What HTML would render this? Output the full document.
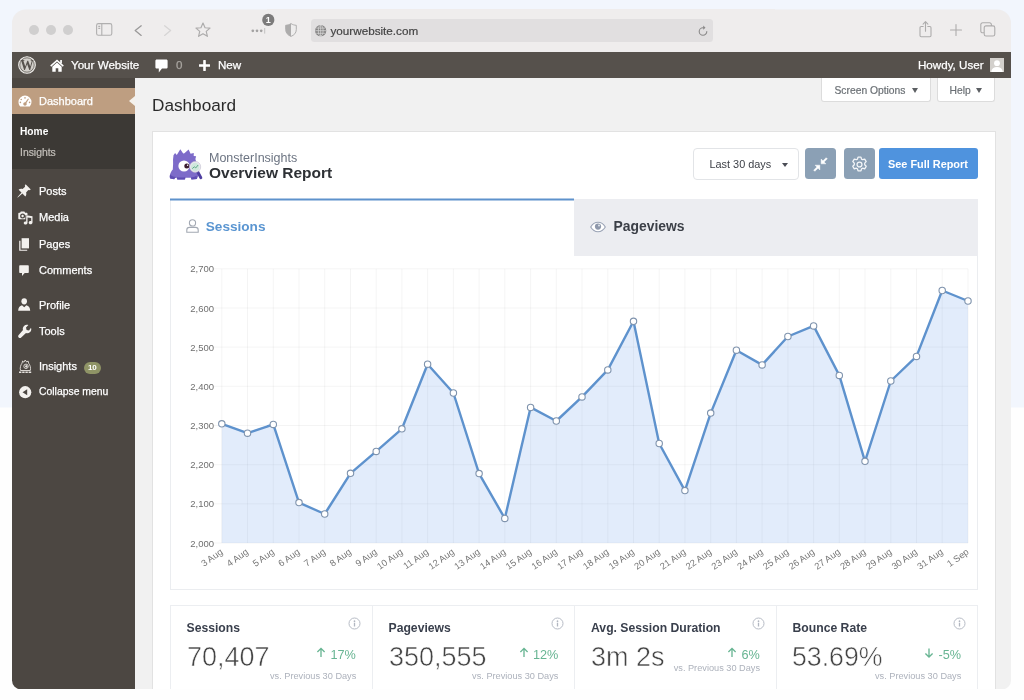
<!DOCTYPE html>
<html lang="en">
<head>
<meta charset="utf-8">
<title>Dashboard ‹ Your Website — WordPress</title>
<style>
*{box-sizing:border-box;margin:0;padding:0}
html,body{width:1024px;height:700px;overflow:hidden}
body{background:linear-gradient(#f2f6fd 0,#f2f6fd 407px,#fefefe 408px,#fefefe 100%);font-family:"Liberation Sans",sans-serif;color:#333;position:relative}
.win{will-change:transform;position:absolute;left:0;top:0;width:1024px;height:700px;clip-path:inset(9.4px 13px 10.6px 12px round 14px 14px 9px 9px);background:#f1f1f1}
.win *{position:absolute;white-space:nowrap}
.t{line-height:1;transform:translateY(-50%)}
/* browser chrome */
.chrome{left:12px;top:9px;width:999px;height:43px;background:#efeded}
.dot{width:10.2px;height:10.2px;border-radius:50%;background:#d0cfcf;top:25.1px}
.url{left:310.5px;top:19px;width:402.5px;height:22.5px;border-radius:3.5px;background:#e1dfe0}
.urltxt{left:330.5px;top:30.8px;font-size:11.7px;color:#444;-webkit-text-stroke:.2px currentColor}
/* admin bar */
.abar{left:12px;top:52px;width:999px;height:26px;background:#56514c}
.abar-t{top:65.1px;font-size:11.6px;color:#fff}
/* sidebar */
.side{left:12px;top:78px;width:123px;height:622px;background:#4c4742}
.side-act{left:12px;top:88px;width:123px;height:26px;background:#be9e81}
.side-sub{left:12px;top:114px;width:123px;height:55px;background:#3c3935}
.mi{left:39px;font-size:11px;color:#fff}
.arrow{left:128.6px;top:96px;width:0;height:0;border:5.5px solid transparent;border-right:6.4px solid #f4f1ec;border-left-width:0}
/* content */
.h1{left:152px;top:105.7px;font-size:17.2px;color:#2b2b2b}
.sbtn{top:78px;height:23.5px;background:#fff;border:1px solid #dcdcdc;border-top:0;border-radius:0 0 3px 3px}
.sbtn-t{font-size:10.3px;color:#6b7075;top:90.8px;-webkit-text-stroke:.2px currentColor}
.postbox{left:152px;top:131px;width:843.5px;height:600px;background:#fff;border:1px solid #e2e2e2}
.mi1{left:209px;top:158px;font-size:12.5px;color:#6c7482}
.mi2{left:209px;top:173.1px;font-size:15.5px;font-weight:bold;color:#2e3135}
.dd{left:693px;top:148px;width:105.5px;height:32px;background:#fff;border:1px solid #e2e4e7;border-radius:4px}
.dd-t{left:709.5px;top:163.8px;font-size:10.9px;color:#3c3f46}
.ib{top:148px;width:31px;height:31px;background:#8ba0b5;border-radius:3.5px}
.fr{left:878.5px;top:148px;width:99.5px;height:31px;background:#4f93de;border-radius:3px}
.fr-t{left:888px;top:163.8px;font-size:10.9px;font-weight:bold;color:#fff}
.card{left:170px;top:199px;width:808px;height:390.5px;background:#fff;border:1px solid #ebedf0}
.tab1{left:170px;top:198px;width:404px;height:3px;background:linear-gradient(rgba(94,146,204,.5) 0,rgba(94,146,204,.5) 1px,#5e92cc 1px,#5e92cc 2px,rgba(94,146,204,.5) 2px,rgba(94,146,204,.5) 3px)}
.tab2{left:574px;top:199px;width:404px;height:57px;background:#ecedf1}
.tab1-t{left:205.8px;top:226.6px;font-size:13.6px;font-weight:bold;color:#5a95d1}
.tab2-t{left:613.5px;top:226.8px;font-size:13.9px;font-weight:bold;color:#3b3f47}
.chart{left:170px;top:256px}
.stats{left:170px;top:605px;width:808px;height:120px;background:#fff;border:1px solid #eceef1}
.div{top:605px;width:1px;height:100px;background:#eceef1}
.st{top:627.5px;font-size:12.2px;font-weight:bold;color:#393f4c}
.sv{top:656.3px;font-size:28.4px;color:#444;-webkit-text-stroke:.55px #fff;transform:translateY(-50%) scaleX(.95);transform-origin:0 50%}
.sp{top:655px;font-size:12.7px;color:#68b593}
.ss{top:677px;font-size:9.2px;color:#adb2bc}
svg.ic{overflow:visible}
.tri{width:0;height:0;border-style:solid;border-width:5px 3px 0;border-color:#5c5f63 transparent transparent}
.abar-t,.mi{-webkit-text-stroke:.25px currentColor}
</style>
</head>
<body>
<div class="win">
<!-- ===== browser chrome ===== -->
<div class="chrome"></div>
<div class="dot" style="left:29px"></div><div class="dot" style="left:46px"></div><div class="dot" style="left:63px"></div>
<svg class="ic" style="left:95.8px;top:23.4px" width="17" height="13" viewBox="0 0 17 13" fill="none" stroke="#b0afaf" stroke-width="1.1"><rect x=".6" y=".6" width="15.2" height="11.6" rx="1.8"/><path d="M5.8.6v11.6M2.3 3.4h1.9M2.3 5.4h1.9"/></svg>
<svg class="ic" style="left:134px;top:24.6px" width="9" height="12" viewBox="0 0 9 12" fill="none" stroke="#9a9999" stroke-width="1.3" stroke-linecap="round" stroke-linejoin="round"><path d="M7.2.8 1.2 5.6l6 4.8"/></svg>
<svg class="ic" style="left:163.2px;top:24.6px" width="9" height="12" viewBox="0 0 9 12" fill="none" stroke="#d6d5d5" stroke-width="1.3" stroke-linecap="round" stroke-linejoin="round"><path d="M1.6.8l6 4.8-6 4.8"/></svg>
<svg class="ic" style="left:194.5px;top:21.5px" width="16.2" height="16.2" viewBox="0 0 15 15" fill="none" stroke="#adacac" stroke-width="1.1" stroke-linejoin="round"><path d="M7.4 1l1.9 4.3 4.6.4-3.5 3 1.1 4.6-4.1-2.5-4.1 2.5 1.1-4.6-3.5-3 4.6-.4z"/></svg>
<svg class="ic" style="left:250px;top:14px" width="26" height="22" viewBox="0 0 26 22"><g fill="#a3a2a2"><circle cx="2.8" cy="16.8" r="1.35"/><circle cx="7" cy="16.8" r="1.35"/><circle cx="11.2" cy="16.8" r="1.35"/></g><rect x="14.2" y="14" width="1" height="5.6" fill="#c2c1c1"/><circle cx="18.3" cy="5.9" r="6.1" fill="#7c7b7b"/><text x="18.3" y="9.2" font-size="9" font-weight="bold" fill="#fff" text-anchor="middle" font-family="Liberation Sans, sans-serif">1</text></svg>
<svg class="ic" style="left:285px;top:22.8px" width="12" height="14" viewBox="0 0 12 14"><path d="M6 .6C4.4 1.7 2.6 2.2.7 2.3v4.3c0 3.3 2.2 5.6 5.3 6.8 3.1-1.2 5.3-3.5 5.3-6.8V2.3C9.4 2.2 7.6 1.7 6 .6z" fill="#eeeded" stroke="#b0afaf" stroke-width="1"/><path d="M6 .6C4.4 1.7 2.6 2.2.7 2.3v4.3c0 3.3 2.2 5.6 5.3 6.8z" fill="#adacac"/></svg>
<div class="url"></div>
<svg class="ic" style="left:314.7px;top:25.2px" width="11.4" height="11.4" viewBox="0 0 11 11" fill="none" stroke="#dddcdc" stroke-width=".7"><circle cx="5.5" cy="5.5" r="5.4" fill="#838282" stroke="none"/><ellipse cx="5.5" cy="5.5" rx="2.3" ry="5"/><path d="M.4 5.5h10.2M1.2 3h8.6M1.2 8h8.6M5.5.4v10.2"/></svg>
<div class="urltxt t">yourwebsite.com</div>
<svg class="ic" style="left:697.7px;top:25.3px" width="10" height="11" viewBox="0 0 10 11" fill="none" stroke="#8a8989" stroke-width="1.1" stroke-linecap="round"><path d="M8.8 6.5a3.8 3.8 0 1 1-3.8-3.8h.6"/><path d="M5.2.6l2.3 2.1-2.3 2.1z" fill="#8a8989" stroke="none"/></svg>
<svg class="ic" style="left:919.2px;top:20.6px" width="13" height="17" viewBox="0 0 13 17" fill="none" stroke="#adacac" stroke-width="1.1" stroke-linecap="round" stroke-linejoin="round"><path d="M4.2 5.5H2.2a1.2 1.2 0 0 0-1.2 1.2v7.8a1.2 1.2 0 0 0 1.2 1.2h8.6a1.2 1.2 0 0 0 1.2-1.2V6.7a1.2 1.2 0 0 0-1.2-1.2H8.8"/><path d="M6.5 10.3V.9M4.1 3.1L6.5.7l2.4 2.4"/></svg>
<svg class="ic" style="left:950.3px;top:23.8px" width="12" height="12" viewBox="0 0 12 12" fill="none" stroke="#adacac" stroke-width="1.1" stroke-linecap="round"><path d="M6 .5v11M.5 6h11"/></svg>
<svg class="ic" style="left:980px;top:22.3px" width="15.4" height="14.6" viewBox="0 0 15.4 14.6" fill="none" stroke="#adacac" stroke-width="1.1"><path d="M4 10.8H2.6A1.8 1.8 0 0 1 .8 9V2.6A1.8 1.8 0 0 1 2.6.8h7A1.8 1.8 0 0 1 11.4 2.6V4"/><rect x="4.2" y="3.9" width="10.6" height="10.1" rx="1.8"/></svg>

<!-- ===== admin bar ===== -->
<div class="abar"></div>
<svg class="ic" style="left:17.5px;top:56px" width="18" height="18" viewBox="0 0 18 18"><circle cx="9" cy="9" r="8.3" fill="#d2cfca" stroke="#efedea" stroke-width="1.1"/><circle cx="9" cy="9" r="7.2" fill="none" stroke="#56514c" stroke-width=".7"/><text x="9" y="14" font-family="Liberation Serif, serif" font-weight="bold" font-size="15" fill="#56514c" text-anchor="middle" textLength="13.5" lengthAdjust="spacingAndGlyphs">W</text></svg>
<svg class="ic" style="left:50px;top:58.5px" width="14" height="13" viewBox="0 0 14 13" fill="#fff"><path d="M7 .4l6.8 6.2-1 1.1L7 2.5 1.2 7.7l-1-1.1z"/><path d="M2.3 7.7L7 3.6l4.7 4.1v5H8.3V9.2H5.7v3.5H2.3z"/><rect x="10.2" y="1" width="1.7" height="3.4"/></svg>
<div class="abar-t t" style="left:71px">Your Website</div>
<svg class="ic" style="left:155px;top:59px" width="13" height="14" viewBox="0 0 13 14" fill="#fff"><path d="M1.8.4h9.4c.800 0 1.4.6 1.4 1.4v6.4c0 .8-.6 1.4-1.4 1.4H7l-3.2 3.8V9.6h-2C1 9.6.4 9 .4 8.2V1.8C.4 1 1 .4 1.8.4z"/></svg>
<div class="abar-t t" style="left:176px;color:#a9a5a0">0</div>
<svg class="ic" style="left:199px;top:60px" width="11" height="11" viewBox="0 0 11 11" fill="#fff"><rect x="4.2" width="2.6" height="11" rx=".4"/><rect y="4.2" width="11" height="2.6" rx=".4"/></svg>
<div class="abar-t t" style="left:218px">New</div>
<div class="abar-t t" style="left:918px">Howdy, User</div>
<svg class="ic" style="left:990.3px;top:57.5px" width="14" height="14" viewBox="0 0 14 14"><rect width="14" height="14" fill="#d3d0cc"/><circle cx="7" cy="5.2" r="2.9" fill="#fff"/><path d="M1.2 14c.3-3.4 2.6-5 5.8-5s5.5 1.6 5.8 5z" fill="#fff"/></svg>

<!-- ===== sidebar ===== -->
<div class="side"></div>
<div class="side-act"></div>
<div class="side-sub"></div>
<div class="arrow"></div>
<svg class="ic" style="left:18px;top:95px" width="14" height="12" viewBox="0 0 14 12" fill="#fff"><path d="M7 .5A6.5 6.5 0 0 0 .5 7c0 1.7.6 3.2 1.7 4.4h9.6A6.4 6.4 0 0 0 13.5 7 6.5 6.5 0 0 0 7 .5zm0 1.6c.5 0 .8.4.8.8s-.3.8-.8.8-.8-.3-.8-.8.3-.8.8-.8zM3.2 3.7c.4 0 .8.3.8.8s-.4.8-.8.8-.800-.400-.800-.800.4-.800.8-.800zm6.9-.2l.8.5-2.5 4c.2.3.3.6.3 1 0 1-.8 1.7-1.7 1.7S5.3 9.9 5.3 9 6 7.3 7 7.3h.3zM2.4 6.6c.4 0 .8.4.8.8s-.4.8-.8.8-.800-.300-.800-.800.3-.800.8-.800zm9.2 0c.4 0 .8.4.8.8s-.4.8-.8.8-.800-.300-.800-.800.3-.800.8-.800z"/></svg>
<div class="mi t" style="top:101px;color:#fff">Dashboard</div>
<div class="t" style="left:20px;top:131.9px;font-size:10.2px;font-weight:bold;color:#fff">Home</div>
<div class="t" style="left:20px;top:153.2px;font-size:10.4px;color:#c4c0bb;-webkit-text-stroke:.2px currentColor">Insights</div>

<svg class="ic" style="left:17.3px;top:184.2px" width="14" height="14" viewBox="0 0 14 14" fill="#f3f1ee"><path d="M8.6.2l5.2 5.2-1.5.8-1-.3-2.2 2.5c.5 1.5.2 3-.8 4L5.4 9.5.8 13.6l-.4-.4 4.1-4.6L1.6 5.7c1-1 2.5-1.3 4-.8l2.5-2.2-.3-1z"/></svg>
<div class="mi t" style="top:190.5px">Posts</div>
<svg class="ic" style="left:17.5px;top:210.8px" width="15" height="14" viewBox="0 0 15 14" fill="#f3f1ee"><path fill-rule="evenodd" d="M2.8.6h3.6l.7 1.2h1.4c.6 0 1 .4 1 1v1.5H7.3v3.9H1.3c-.6 0-1-.4-1-1V2.8c0-.6.4-1 1-1h.8zM4.6 2.5a2.5 2.5 0 1 0 0 5 2.5 2.5 0 0 0 0-5zm0 1.3a1.2 1.2 0 1 1 0 2.4 1.2 1.2 0 0 1 0-2.4z"/><path d="M8.2 4.3l6.3.9v6.2c0 1-.9 1.8-2 1.8s-1.8-.6-1.8-1.5c0-.9.8-1.6 1.8-1.6.3 0 .5 0 .7.1V7.1l-3.7-.6v5.2c0 1-.9 1.8-2 1.8S5.7 12.9 5.7 12s.8-1.6 1.8-1.6c.3 0 .5 0 .7.1z"/></svg>
<div class="mi t" style="top:217px">Media</div>
<svg class="ic" style="left:19px;top:237.7px" width="11" height="13" viewBox="0 0 11 13" fill="#f3f1ee"><path d="M2.6.2h7.4v10.2H2.6z"/><path d="M.2 2.7h1.3v9h6.7v1.1H.2z"/></svg>
<div class="mi t" style="top:243.5px">Pages</div>
<svg class="ic" style="left:19.3px;top:264.7px" width="10" height="11" viewBox="0 0 10 11" fill="#f3f1ee"><path d="M1.2.2h7.6c.6 0 1 .4 1 1v5.8c0 .6-.4 1-1 1H5.7L3 10.9V8H1.2c-.6 0-1-.4-1-1V1.2c0-.6.4-1 1-1z"/></svg>
<div class="mi t" style="top:270px">Comments</div>
<svg class="ic" style="left:18.4px;top:298.4px" width="12.5" height="13" viewBox="0 0 12.5 13" fill="#f3f1ee"><ellipse cx="6.2" cy="3.3" rx="2.8" ry="3.1"/><path d="M.2 12.8c0-3 1.5-5 3.8-5.5l2.2 1.9 2.2-1.9c2.3.5 3.8 2.5 3.8 5.5z"/></svg>
<div class="mi t" style="top:305px">Profile</div>
<svg class="ic" style="left:18px;top:325px" width="13.5" height="13" viewBox="0 0 13.5 13" fill="#f3f1ee"><path d="M13 2.7c.6 1.5.3 3.2-.9 4.4-1.1 1.1-2.7 1.5-4.1 1L3.2 12.4c-.7.7-1.8.7-2.5 0s-.7-1.8 0-2.5L5 5.1c-.5-1.4-.1-3 1-4.1C7.2-.2 8.9-.5 10.4.1L8 2.5l.6 2.4 2.4.6z"/></svg>
<div class="mi t" style="top:331px">Tools</div>
<svg class="ic" style="left:17.5px;top:358.5px" width="15" height="15" viewBox="0 0 15 15" fill="none" stroke="#e6e3df" stroke-width=".9"><path d="M2.5 11.5c-.8-3 .3-5.5 1.5-7.3L4.6 2l1.3 1.2L7.2 1l1.5 2 1.4-1 .6 2.4c1.3 1.7 2.3 4.1 1.6 7.1z"/><circle cx="8" cy="7.3" r="2.2"/><circle cx="8.3" cy="7.4" r=".8" fill="#e6e3df"/><path d="M1 13.3h13" stroke-width="1.6" stroke-dasharray="2.4 .8"/></svg>
<div class="mi t" style="top:366.3px">Insights</div>
<div style="left:84px;top:362px;width:17px;height:11.5px;border-radius:6px;background:#8f9466"></div>
<div class="t" style="left:88px;top:368px;font-size:8px;font-weight:bold;color:#fff;letter-spacing:-.2px">10</div>
<svg class="ic" style="left:18.5px;top:386.2px" width="12.4" height="12.4" viewBox="0 0 13 13"><circle cx="6.5" cy="6.5" r="6.4" fill="#f3f1ee"/><path d="M8.6 3.3v6.4L3.7 6.5z" fill="#4c4742"/></svg>
<div class="mi t" style="top:392px;font-size:10.4px">Collapse menu</div>

<!-- ===== content ===== -->
<div class="h1 t">Dashboard</div>
<div class="sbtn" style="left:821px;width:110px"></div>
<div class="sbtn-t t" style="left:834.5px">Screen Options</div>
<div class="tri" style="left:912px;top:88px"></div>
<div class="sbtn" style="left:936.6px;width:58.4px"></div>
<div class="sbtn-t t" style="left:949.5px">Help</div>
<div class="tri" style="left:975.8px;top:88px"></div>

<div class="postbox"></div>
<!-- MonsterInsights logo -->
<svg class="ic" style="left:164px;top:144px" width="44" height="40" viewBox="0 0 44 40">
<path d="M6.3 34.6C5 32.2 6.3 28.2 8.8 25.4L9.1 20C8.9 17 9 14 9.5 11.3l1.6-2.4 1.7 2.1 3.5-5.8 2.9 4.3 1.2-.2 4.2-3.8 2 4.3 3.2-.7-.1 2.9 2.4.2-.7 2.8c1.2 3 1.5 7 1.1 11l2.4 4.4-2 4.6-5.4.4-.5-1.6h-5.4l-.6 1.6h-7.8l-.6-1.6h-1.4l-.6 1.4z" fill="#7d6bc9"/>
<path d="M6.3 34.6c-.6-1.1-.6-2.6-.2-4.2 1.4 1.5 3.3 2.3 5.6 2.6l.3.8h-1.4l-.6 1.4zM12.9 33.2c2.8.3 5.6.3 8.3 0l-.4 2.2h-7.4zM26.9 33.6c2-.4 4-1 5.7-1.9l.4 3.3-5.6.4z" fill="#5f4db3"/>
<circle cx="20" cy="22" r="5.6" fill="#fff"/>
<circle cx="22.8" cy="22.1" r="2.5" fill="#3c1d30"/>
<circle cx="23.6" cy="21.2" r=".7" fill="#fff"/>
<path d="M33.6 27.6l3.2 6" stroke="#4f3fa0" stroke-width="3" stroke-linecap="round"/>
<circle cx="31.2" cy="22.9" r="4.9" fill="#cfe7dc" stroke="#eceaf1" stroke-width="1.3"/>
<circle cx="31.2" cy="22.9" r="5.5" fill="none" stroke="#b9b4c6" stroke-width=".5"/>
<path d="M28.3 24.6l2-1.8 1.5 1.1 2.3-2.9" fill="none" stroke="#62a98a" stroke-width="1"/>
</svg>
<div class="mi1 t">MonsterInsights</div>
<div class="mi2 t">Overview Report</div>
<div class="dd"></div>
<div class="dd-t t">Last 30 days</div>
<div class="tri" style="left:781.7px;top:162.5px;border-width:4.5px 3px 0;border-top-color:#4a4d55"></div>
<div class="ib" style="left:804.5px"></div>
<svg class="ic" style="left:812.5px;top:156.5px" width="15" height="15" viewBox="0 0 14 14" fill="#fff" stroke="#fff" stroke-width=".4"><path d="M13.4 1.7l-3 3 1.7 1.7H7.6V1.9l1.7 1.7 3-3z"/><path d="M.6 12.3l3-3-1.7-1.7h4.5v4.5l-1.7-1.7-3 3z"/></svg>
<div class="ib" style="left:843.5px"></div>
<svg class="ic" style="left:850.5px;top:155.8px" width="17" height="17" viewBox="0 0 16 16" fill="none" stroke="#f4f6f9" stroke-width="1.2" stroke-linejoin="round"><path d="M6.6 1h2.8l.5 1.9 1.1.6 1.9-.6 1.4 2.4-1.4 1.4v1.6l1.4 1.4-1.4 2.4-1.9-.6-1.1.6-.5 1.9H6.6l-.5-1.9-1.1-.6-1.9.6-1.4-2.4 1.4-1.4V6.7L1.7 5.3l1.4-2.4 1.9.6 1.1-.6z"/><circle cx="8" cy="8" r="2.3"/></svg>
<div class="fr"></div>
<div class="fr-t t">See Full Report</div>

<div class="card"></div>
<div class="tab2"></div>
<div class="tab1"></div>
<svg class="ic" style="left:185.5px;top:219px" width="13" height="14" viewBox="0 0 13 14" fill="none" stroke="#a3a9b3" stroke-width="1.1"><circle cx="6.5" cy="3.9" r="3.1"/><path d="M3.4 8.4h6.2c1.4 0 2.6 1.1 2.6 2.6v2.2H.8V11c0-1.5 1.2-2.6 2.6-2.6z"/></svg>
<div class="tab1-t t">Sessions</div>
<svg class="ic" style="left:589.5px;top:220.5px" width="16" height="12" viewBox="0 0 16 12"><path d="M.7 6C2.5 3 5 1.3 8 1.3S13.5 3 15.3 6C13.5 9 11 10.7 8 10.7S2.5 9 .7 6z" fill="#fff" stroke="#9aa3b5" stroke-width="1.1"/><circle cx="8" cy="5.6" r="3.1" fill="#8e98ab"/><circle cx="9" cy="4.6" r="1" fill="#dfe3ea"/></svg>
<div class="tab2-t t">Pageviews</div>
<svg class="chart" width="808" height="333" viewBox="0 0 808 333" font-family="Liberation Sans, sans-serif">
<path d="M43.8 12.8H798M43.8 52H798M43.8 91.1H798M43.8 130.3H798M43.8 169.5H798M43.8 208.7H798M43.8 247.8H798M43.8 287H798M51.8 12.8V287M77.5 12.8V287M103.3 12.8V287M129 12.8V287M154.7 12.8V287M180.5 12.8V287M206.2 12.8V287M231.9 12.8V287M257.6 12.8V287M283.4 12.8V287M309.1 12.8V287M334.8 12.8V287M360.6 12.8V287M386.3 12.8V287M412 12.8V287M437.8 12.8V287M463.5 12.8V287M489.2 12.8V287M514.9 12.8V287M540.7 12.8V287M566.4 12.8V287M592.1 12.8V287M617.9 12.8V287M643.6 12.8V287M669.3 12.8V287M695 12.8V287M720.8 12.8V287M746.5 12.8V287M772.2 12.8V287M798 12.8V287" stroke="#000" stroke-opacity=".042" stroke-width="1" fill="none"/>
<path d="M51.8 287L51.8 167.8L77.5 177.2L103.3 168.4L129 246.6L154.7 258L180.5 217.3L206.2 195.4L231.9 172.8L257.6 108.2L283.4 137L309.1 217.6L334.8 262.4L360.6 151.4L386.3 165L412 140.9L437.8 113.9L463.5 65.3L489.2 187.5L514.9 234.6L540.7 157.1L566.4 94.2L592.1 108.9L617.9 80.5L643.6 69.9L669.3 119.4L695 205.3L720.8 125L746.5 100.4L772.2 34.5L798 45L798 287Z" fill="#6a9de9" fill-opacity=".195"/>
<path d="M51.8 167.8L77.5 177.2L103.3 168.4L129 246.6L154.7 258L180.5 217.3L206.2 195.4L231.9 172.8L257.6 108.2L283.4 137L309.1 217.6L334.8 262.4L360.6 151.4L386.3 165L412 140.9L437.8 113.9L463.5 65.3L489.2 187.5L514.9 234.6L540.7 157.1L566.4 94.2L592.1 108.9L617.9 80.5L643.6 69.9L669.3 119.4L695 205.3L720.8 125L746.5 100.4L772.2 34.5L798 45" fill="none" stroke="#5e92cd" stroke-width="2.4" stroke-linejoin="round"/>
<g fill="#fff" stroke="#7f93ad" stroke-width="1.1"><circle cx="51.8" cy="167.8" r="3.2"/><circle cx="77.5" cy="177.2" r="3.2"/><circle cx="103.3" cy="168.4" r="3.2"/><circle cx="129" cy="246.6" r="3.2"/><circle cx="154.7" cy="258" r="3.2"/><circle cx="180.5" cy="217.3" r="3.2"/><circle cx="206.2" cy="195.4" r="3.2"/><circle cx="231.9" cy="172.8" r="3.2"/><circle cx="257.6" cy="108.2" r="3.2"/><circle cx="283.4" cy="137" r="3.2"/><circle cx="309.1" cy="217.6" r="3.2"/><circle cx="334.8" cy="262.4" r="3.2"/><circle cx="360.6" cy="151.4" r="3.2"/><circle cx="386.3" cy="165" r="3.2"/><circle cx="412" cy="140.9" r="3.2"/><circle cx="437.8" cy="113.9" r="3.2"/><circle cx="463.5" cy="65.3" r="3.2"/><circle cx="489.2" cy="187.5" r="3.2"/><circle cx="514.9" cy="234.6" r="3.2"/><circle cx="540.7" cy="157.1" r="3.2"/><circle cx="566.4" cy="94.2" r="3.2"/><circle cx="592.1" cy="108.9" r="3.2"/><circle cx="617.9" cy="80.5" r="3.2"/><circle cx="643.6" cy="69.9" r="3.2"/><circle cx="669.3" cy="119.4" r="3.2"/><circle cx="695" cy="205.3" r="3.2"/><circle cx="720.8" cy="125" r="3.2"/><circle cx="746.5" cy="100.4" r="3.2"/><circle cx="772.2" cy="34.5" r="3.2"/><circle cx="798" cy="45" r="3.2"/></g>
<g font-size="9.5" fill="#6f6f6f" text-anchor="end">
<text x="44" y="16.4">2,700</text>
<text x="44" y="55.6">2,600</text>
<text x="44" y="94.7">2,500</text>
<text x="44" y="133.9">2,400</text>
<text x="44" y="173.1">2,300</text>
<text x="44" y="212.3">2,200</text>
<text x="44" y="251.4">2,100</text>
<text x="44" y="290.6">2,000</text>
</g>
<g font-size="9.3" fill="#747474" text-anchor="end">
<text transform="translate(53.4 297.4) rotate(-35)">3 Aug</text>
<text transform="translate(79.1 297.4) rotate(-35)">4 Aug</text>
<text transform="translate(104.9 297.4) rotate(-35)">5 Aug</text>
<text transform="translate(130.6 297.4) rotate(-35)">6 Aug</text>
<text transform="translate(156.3 297.4) rotate(-35)">7 Aug</text>
<text transform="translate(182.1 297.4) rotate(-35)">8 Aug</text>
<text transform="translate(207.8 297.4) rotate(-35)">9 Aug</text>
<text transform="translate(233.5 297.4) rotate(-35)">10 Aug</text>
<text transform="translate(259.2 297.4) rotate(-35)">11 Aug</text>
<text transform="translate(285 297.4) rotate(-35)">12 Aug</text>
<text transform="translate(310.7 297.4) rotate(-35)">13 Aug</text>
<text transform="translate(336.4 297.4) rotate(-35)">14 Aug</text>
<text transform="translate(362.2 297.4) rotate(-35)">15 Aug</text>
<text transform="translate(387.9 297.4) rotate(-35)">16 Aug</text>
<text transform="translate(413.6 297.4) rotate(-35)">17 Aug</text>
<text transform="translate(439.4 297.4) rotate(-35)">18 Aug</text>
<text transform="translate(465.1 297.4) rotate(-35)">19 Aug</text>
<text transform="translate(490.8 297.4) rotate(-35)">20 Aug</text>
<text transform="translate(516.5 297.4) rotate(-35)">21 Aug</text>
<text transform="translate(542.3 297.4) rotate(-35)">22 Aug</text>
<text transform="translate(568 297.4) rotate(-35)">23 Aug</text>
<text transform="translate(593.7 297.4) rotate(-35)">24 Aug</text>
<text transform="translate(619.5 297.4) rotate(-35)">25 Aug</text>
<text transform="translate(645.2 297.4) rotate(-35)">26 Aug</text>
<text transform="translate(670.9 297.4) rotate(-35)">27 Aug</text>
<text transform="translate(696.6 297.4) rotate(-35)">28 Aug</text>
<text transform="translate(722.4 297.4) rotate(-35)">29 Aug</text>
<text transform="translate(748.1 297.4) rotate(-35)">30 Aug</text>
<text transform="translate(773.8 297.4) rotate(-35)">31 Aug</text>
<text transform="translate(799.6 297.4) rotate(-35)">1 Sep</text>
</g>
</svg>

<div class="stats"></div>
<div class="div" style="left:372px"></div><div class="div" style="left:574px"></div><div class="div" style="left:776px"></div>
<div class="st t" style="left:186.5px">Sessions</div>
<div class="sv t" style="left:186.8px">70,407</div>
<svg class="ic" style="left:347.5px;top:616.7px" width="13" height="13" viewBox="0 0 13 13"><circle cx="6.5" cy="6.5" r="5.5" fill="none" stroke="#b7bcc6" stroke-width="1"/><circle cx="6.5" cy="4.2" r=".85" fill="#b1b6c0"/><rect x="5.85" y="5.7" width="1.3" height="3.8" fill="#b1b6c0"/></svg>
<svg class="ic" style="left:316.4px;top:647.2px" width="10" height="11.4" viewBox="0 0 10 12" fill="none" stroke="#68b593" stroke-width="1.4"><path d="M5 10.5V1.5M1.2 5.2L5 1.4l3.8 3.8"/></svg>
<div class="sp t" style="left:330.5px">17%</div>
<div class="ss t" style="right:667.7px;top:676.5px">vs. Previous 30 Days</div>
<div class="st t" style="left:388.5px">Pageviews</div>
<div class="sv t" style="left:388.8px">350,555</div>
<svg class="ic" style="left:550.5px;top:616.7px" width="13" height="13" viewBox="0 0 13 13"><circle cx="6.5" cy="6.5" r="5.5" fill="none" stroke="#b7bcc6" stroke-width="1"/><circle cx="6.5" cy="4.2" r=".85" fill="#b1b6c0"/><rect x="5.85" y="5.7" width="1.3" height="3.8" fill="#b1b6c0"/></svg>
<svg class="ic" style="left:519.4px;top:647.2px" width="10" height="11.4" viewBox="0 0 10 12" fill="none" stroke="#68b593" stroke-width="1.4"><path d="M5 10.5V1.5M1.2 5.2L5 1.4l3.8 3.8"/></svg>
<div class="sp t" style="left:533px">12%</div>
<div class="ss t" style="right:465.6px;top:676.5px">vs. Previous 30 Days</div>
<div class="st t" style="left:591px">Avg. Session Duration</div>
<div class="sv t" style="left:591.3px">3m 2s</div>
<svg class="ic" style="left:751.9px;top:616.7px" width="13" height="13" viewBox="0 0 13 13"><circle cx="6.5" cy="6.5" r="5.5" fill="none" stroke="#b7bcc6" stroke-width="1"/><circle cx="6.5" cy="4.2" r=".85" fill="#b1b6c0"/><rect x="5.85" y="5.7" width="1.3" height="3.8" fill="#b1b6c0"/></svg>
<svg class="ic" style="left:727.4px;top:647.2px" width="10" height="11.4" viewBox="0 0 10 12" fill="none" stroke="#68b593" stroke-width="1.4"><path d="M5 10.5V1.5M1.2 5.2L5 1.4l3.8 3.8"/></svg>
<div class="sp t" style="left:741.5px">6%</div>
<div class="ss t" style="right:264px;top:669px">vs. Previous 30 Days</div>
<div class="st t" style="left:792.5px">Bounce Rate</div>
<div class="sv t" style="left:791.8px;transform:translateY(-50%) scaleX(.94)">53.69%</div>
<svg class="ic" style="left:952.8px;top:616.7px" width="13" height="13" viewBox="0 0 13 13"><circle cx="6.5" cy="6.5" r="5.5" fill="none" stroke="#b7bcc6" stroke-width="1"/><circle cx="6.5" cy="4.2" r=".85" fill="#b1b6c0"/><rect x="5.85" y="5.7" width="1.3" height="3.8" fill="#b1b6c0"/></svg>
<svg class="ic" style="left:924.4px;top:647.2px" width="10" height="11.4" viewBox="0 0 10 12" fill="none" stroke="#68b593" stroke-width="1.4"><path d="M5 1.5v9M1.2 6.8L5 10.6l3.8-3.8"/></svg>
<div class="sp t" style="left:938.5px">-5%</div>
<div class="ss t" style="right:62.700000000000045px;top:676.5px">vs. Previous 30 Days</div>
</div>
</body>
</html>
